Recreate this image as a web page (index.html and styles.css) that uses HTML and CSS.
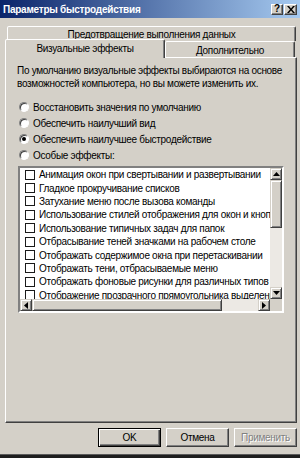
FILE: index.html
```html
<!DOCTYPE html>
<html lang="ru">
<head>
    <meta charset="UTF-8">
    <title>Параметры быстродействия</title>
    <link rel="stylesheet" href="styles.css">
</head>
<body>

<div class="window">
    <!-- Заголовок окна -->
    <div class="titlebar">
        <span class="title">Параметры быстродействия</span>
        <div class="caption-buttons">
            <span class="cap-btn cap-help">?</span>
            <span class="cap-btn cap-close">
                <svg width="8" height="7" viewBox="0 0 8 7"><path d="M0 0h2l2 2.4L6 0h2L5 3.5 8 7H6L4 4.6 2 7H0l3-3.5z" fill="#000"/></svg>
            </span>
        </div>
    </div>

    <div class="content">
        <!-- Вкладки -->
        <div class="tabs">
            <div class="tab-row tab-row-back">
                <div class="tab tab-wide">Предотвращение выполнения данных</div>
            </div>
            <div class="tab-row tab-row-front">
                <div class="tab tab-active">Визуальные эффекты</div>
                <div class="tab tab-second">Дополнительно</div>
            </div>
        </div>

        <div class="panel">
            <p class="hint">По умолчанию визуальные эффекты выбираются на основе<br>возможностей компьютера, но вы можете изменить их.</p>

            <ul class="radios">
                <li><span class="radio"></span>Восстановить значения по умолчанию</li>
                <li><span class="radio"></span>Обеспечить наилучший вид</li>
                <li><span class="radio checked"></span>Обеспечить наилучшее быстродействие</li>
                <li><span class="radio"></span>Особые эффекты:</li>
            </ul>

            <!-- Список эффектов -->
            <div class="listbox">
                <div class="list-top">
                    <ul class="items">
                        <li><span class="check"></span>Анимация окон при свертывании и развертывании</li>
                        <li><span class="check"></span>Гладкое прокручивание списков</li>
                        <li><span class="check"></span>Затухание меню после вызова команды</li>
                        <li><span class="check"></span>Использование стилей отображения для окон и кнопок</li>
                        <li><span class="check"></span>Использование типичных задач для папок</li>
                        <li><span class="check"></span>Отбрасывание теней значками на рабочем столе</li>
                        <li><span class="check"></span>Отображать содержимое окна при перетаскивании</li>
                        <li><span class="check"></span>Отображать тени, отбрасываемые меню</li>
                        <li><span class="check"></span>Отображать фоновые рисунки для различных типов папок</li>
                        <li><span class="check"></span>Отображение прозрачного прямоугольника выделения</li>
                    </ul>
                    <div class="vscroll">
                        <span class="sb-btn">
                            <svg width="7" height="4" viewBox="0 0 7 4"><path d="M3.5 0L7 4H0z" fill="#000"/></svg>
                        </span>
                        <span class="sb-thumb-v"></span>
                        <span class="sb-track"></span>
                        <span class="sb-btn">
                            <svg width="7" height="4" viewBox="0 0 7 4"><path d="M0 0h7L3.5 4z" fill="#000"/></svg>
                        </span>
                    </div>
                </div>
                <div class="hscroll">
                    <span class="sb-btn">
                        <svg width="4" height="7" viewBox="0 0 4 7"><path d="M0 3.5L4 0v7z" fill="#000"/></svg>
                    </span>
                    <span class="sb-thumb-h"></span>
                    <span class="sb-track"></span>
                    <span class="sb-btn">
                        <svg width="4" height="7" viewBox="0 0 4 7"><path d="M0 0l4 3.5L0 7z" fill="#000"/></svg>
                    </span>
                    <span class="sb-corner"></span>
                </div>
            </div>
        </div>

        <!-- Кнопки диалога -->
        <div class="buttons">
            <button class="btn btn-default">OK</button>
            <button class="btn">Отмена</button>
            <button class="btn btn-disabled">Применить</button>
        </div>
    </div>

    <div class="bottom-edge"></div>
</div>

</body>
</html>
```

FILE: styles.css
```css
/* Общие стили окна */
* {
    box-sizing: border-box;
}
html, body {
    margin: 0;
    padding: 0;
}
body {
    background: #d4d0c8;
    font-family: "Liberation Sans", Arial, sans-serif;
    font-size: 10px;
    letter-spacing: -0.3px;
    color: #000;
}
.window {
    width: 300px;
    height: 458px;
    display: flex;
    flex-direction: column;
    background: #d4d0c8;
    overflow: hidden;
}

/* Заголовок */
.titlebar {
    height: 18px;
    display: flex;
    align-items: center;
    justify-content: space-between;
    padding: 0 3px;
    background: linear-gradient(to right, #0a246a, #a6caf0);
}
.title {
    color: #fff;
    font-weight: bold;
    font-size: 10px;
    letter-spacing: -0.25px;
}
.caption-buttons {
    display: flex;
    gap: 1px;
}
.cap-btn {
    width: 13px;
    height: 11px;
    display: flex;
    align-items: center;
    justify-content: center;
    background: #d4d0c8;
    border: 1px solid;
    border-color: #fff #404040 #404040 #fff;
    box-shadow: inset -1px -1px #808080;
    font-weight: bold;
    font-size: 10px;
    letter-spacing: 0;
    line-height: 1;
}
.cap-help {
    width: 12px;
}

/* Контент */
.content {
    flex: 1;
    display: flex;
    flex-direction: column;
    padding: 8px 3px 0 5px;
}

/* Вкладки */
.tabs {
    height: 31px;
    position: relative;
    z-index: 1;
}
.tab-row {
    display: flex;
}
.tab-row-back {
    height: 15px;
    padding: 0 1px 0 2px;
}
.tab-row-front {
    height: 16px;
}
.tab {
    display: flex;
    align-items: center;
    justify-content: center;
    border: 1px solid;
    border-bottom: none;
    border-color: #fff #404040 transparent #fff;
    border-radius: 2px 2px 0 0;
    box-shadow: inset -1px 0 #808080;
    background: #d4d0c8;
}
.tab-wide {
    width: 100%;
    height: 15px;
}
.tab-active {
    width: 160px;
    height: 19px;
    margin-top: -2px;
    padding-bottom: 2px;
}
.tab-second {
    width: 130px;
    height: 16px;
    padding-top: 2px;
}

/* Панель вкладки */
.panel {
    height: 366px;
    border: 1px solid;
    border-color: #fff #404040 #404040 #fff;
    box-shadow: inset -1px -1px #808080;
    padding: 6px 12px 0 12px;
}
.hint {
    margin: 0 0 0 -1px;
    line-height: 13px;
    white-space: nowrap;
}
.radios {
    list-style: none;
    margin: 9px 0 3px;
    padding: 0;
}
.radios li {
    height: 16px;
    display: flex;
    align-items: center;
}
.radio {
    width: 10px;
    height: 10px;
    margin: 0 4px 0 1px;
    border-radius: 50%;
    background: #fff;
    border: 1px solid;
    border-color: #808080 #fff #fff #808080;
    box-shadow: inset 1px 1px #404040;
    display: flex;
    align-items: center;
    justify-content: center;
}
.radio.checked::after {
    content: "";
    width: 4px;
    height: 4px;
    border-radius: 50%;
    background: #000;
}

/* Список эффектов */
.listbox {
    height: 147px;
    border: 2px solid;
    border-color: #808080 #fff #fff #808080;
    background: #fff;
    display: flex;
    flex-direction: column;
}
.list-top {
    height: 131px;
    display: flex;
}
.items {
    flex: 1;
    list-style: none;
    margin: 0;
    padding: 0;
    overflow: hidden;
    white-space: nowrap;
}
.items li {
    height: 13.4px;
    display: flex;
    align-items: center;
    padding-left: 5px;
}
.check {
    flex: none;
    width: 10px;
    height: 10px;
    margin-right: 4px;
    border: 1px solid #1a1a1a;
    background: #fff;
}

/* Полосы прокрутки */
.vscroll {
    width: 12px;
    display: flex;
    flex-direction: column;
}
.hscroll {
    height: 12px;
    display: flex;
}
.sb-btn,
.sb-thumb-v,
.sb-thumb-h {
    flex: none;
    background: #d4d0c8;
    border: 1px solid;
    border-color: #d4d0c8 #404040 #404040 #d4d0c8;
    box-shadow: inset 1px 1px #fff, inset -1px -1px #808080;
}
.sb-btn {
    width: 12px;
    height: 12px;
    display: flex;
    align-items: center;
    justify-content: center;
}
.sb-thumb-v {
    height: 48px;
}
.sb-thumb-h {
    width: 190px;
}
.sb-track {
    flex: 1;
    background: #ece9e4;
}
.sb-corner {
    width: 12px;
    background: #d4d0c8;
}

/* Кнопки */
.buttons {
    display: flex;
    justify-content: flex-end;
    gap: 5px;
    margin-top: 5px;
}
.btn {
    width: 63px;
    height: 19px;
    padding: 0;
    font: inherit;
    letter-spacing: inherit;
    color: #000;
    background: #d4d0c8;
    border: 1px solid;
    border-color: #fff #404040 #404040 #fff;
    box-shadow: inset -1px -1px #808080;
}
.btn-default {
    border-color: #000;
    box-shadow: inset 1px 1px #fff, inset -1px -1px #404040, inset -2px -2px #808080;
}
.btn-disabled {
    color: #808080;
    text-shadow: 1px 1px #fff;
}

.bottom-edge {
    height: 4px;
    background: #1e1e1e;
    border-top: 1px solid #5a5a5a;
}
```
